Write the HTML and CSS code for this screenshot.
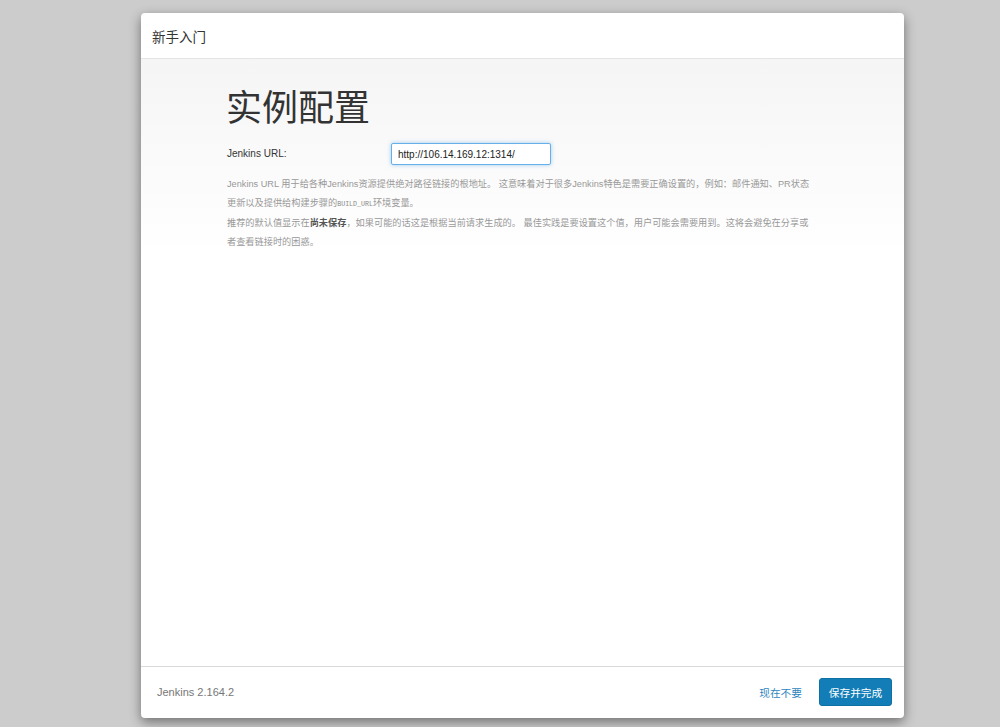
FILE: index.html
```html
<!DOCTYPE html>
<html lang="zh-CN">
<head>
<meta charset="utf-8">
<title>新手入门</title>
<link rel="stylesheet" href="styles.css">
</head>
<body>
<div class="modal">
  <div class="modal-header">
    <h4 class="modal-title">新手入门</h4>
  </div>
  <div class="modal-body">
    <div class="content">
      <h1 class="heading">实例配置</h1>
      <div class="form-row">
        <label class="label" for="url">Jenkins URL:</label>
        <input class="url-input" id="url" type="text" value="http://106.14.169.12:1314/">
      </div>
      <div class="help">
        <div>Jenkins URL 用于给各种Jenkins资源提供绝对路径链接的根地址。 这意味着对于很多Jenkins特色是需要正确设置的，例如：邮件通知、PR状态更新以及提供给构建步骤的<code class="code">BUILD_URL</code>环境变量。</div>
        <div>推荐的默认值显示在<strong class="strong">尚未保存</strong>，如果可能的话这是根据当前请求生成的。 最佳实践是要设置这个值，用户可能会需要用到。这将会避免在分享或者查看链接时的困惑。</div>
      </div>
    </div>
  </div>
  <div class="modal-footer">
    <span class="version">Jenkins 2.164.2</span>
    <div class="actions">
      <a class="skip" href="#">现在不要</a>
      <button class="btn-primary" type="button">保存并完成</button>
    </div>
  </div>
</div>
</body>
</html>
```

FILE: styles.css
```css
html, body {
  margin: 0;
  padding: 0;
}

body {
  background: #cccccc;
  font-family: "Liberation Sans", "Noto Sans CJK SC", sans-serif;
  color: #333;
  height: 727px;
  overflow: hidden;
}

.modal {
  margin: 13px 0 0 141px;
  width: 763px;
  height: 705px;
  background: #fff;
  border-radius: 4px;
  box-shadow: 0 4px 12px rgba(0, 0, 0, 0.45);
  display: flex;
  flex-direction: column;
  overflow: hidden;
}

.modal-header {
  height: 45px;
  border-bottom: 1px solid #e5e5e5;
  display: flex;
  align-items: center;
  padding-left: 11px;
  flex: none;
}

.modal-title {
  margin: 0;
  font-size: 13.5px;
  font-weight: normal;
  color: #333;
  font-family: "Noto Sans CJK SC", sans-serif;
}

.modal-body {
  flex: 1;
  background: linear-gradient(#f5f5f5, #ffffff 200px);
}

.content {
  width: 588px;
  padding: 26px 0 0 85px;
}

.heading {
  margin: 0;
  font-size: 36px;
  line-height: 40px;
  font-weight: normal;
  color: #333;
  font-family: "Noto Sans CJK SC", sans-serif;
}

.form-row {
  display: grid;
  grid-template-columns: 165px 160px;
  align-items: center;
  margin-top: 18px;
}

.label {
  font-size: 10px;
  color: #333;
  padding-left: 1px;
  padding-bottom: 2px;
}

.url-input {
  box-sizing: border-box;
  width: 160px;
  height: 22px;
  margin: 0;
  padding: 0 6px;
  font-family: "Liberation Sans", sans-serif;
  font-size: 10px;
  color: #222;
  border: 1px solid #66afe9;
  border-radius: 2px;
  box-shadow: 0 0 4px rgba(102, 175, 233, 0.6);
  outline: none;
  background: #fff;
}

.help {
  margin-top: 10px;
  font-size: 9.2px;
  line-height: 19.4px;
  color: #999;
  padding-left: 1px;
}

.help > div {
  margin: 0;
}

.code {
  font-family: "Liberation Mono", monospace;
  font-size: 6.6px;
  line-height: 1;
  color: #888;
}

.strong {
  color: #555;
  font-weight: bold;
}

.modal-footer {
  flex: none;
  height: 50px;
  border-top: 1px solid #d9d9d9;
  display: flex;
  align-items: center;
  justify-content: space-between;
  padding: 0 12px 1px 16px;
}

.version {
  font-size: 11px;
  color: #777;
}

.actions {
  display: flex;
  align-items: center;
  gap: 17px;
}

.skip {
  font-family: "Noto Sans CJK SC", sans-serif;
  font-size: 10.7px;
  color: #2f85bd;
  text-decoration: none;
}

.btn-primary {
  font-family: "Noto Sans CJK SC", sans-serif;
  font-size: 10.7px;
  color: #fff;
  background: #127db6;
  border: 1px solid #0f70a3;
  border-radius: 3px;
  width: 73px;
  height: 28px;
  padding: 0;
}
```
